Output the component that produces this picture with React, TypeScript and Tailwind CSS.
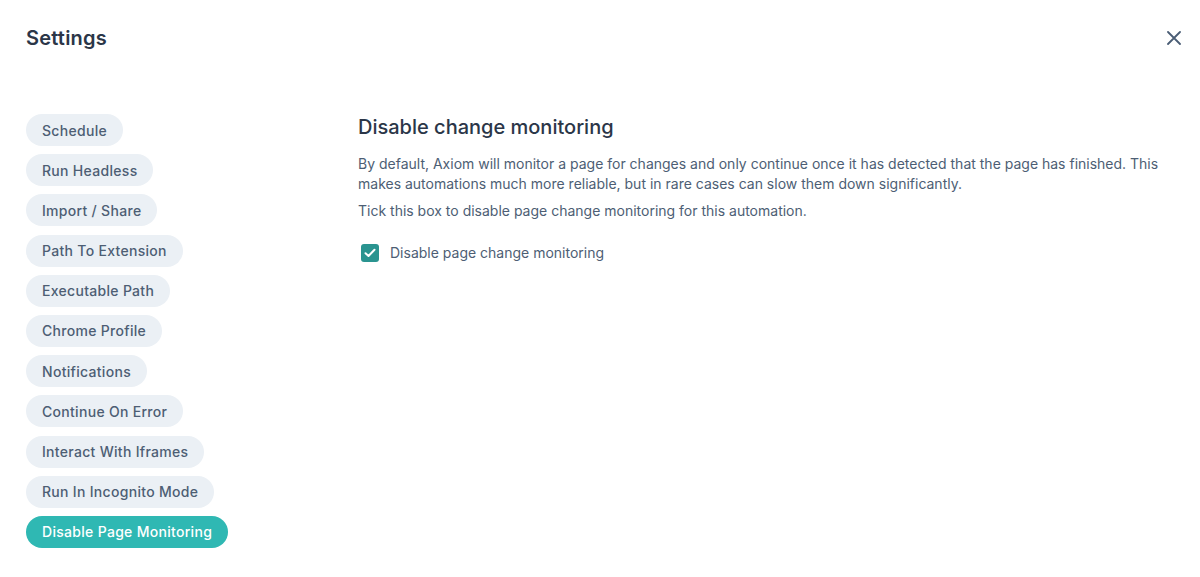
import React from "react";

const items = [
  "Schedule",
  "Run Headless",
  "Import / Share",
  "Path To Extension",
  "Executable Path",
  "Chrome Profile",
  "Notifications",
  "Continue On Error",
  "Interact With Iframes",
  "Run In Incognito Mode",
  "Disable Page Monitoring",
];

export default function App() {
  return (
    <div
      className="w-[1200px] h-[577px] bg-white text-[#2d3a4b] overflow-hidden"
      style={{ fontFamily: "Inter, 'Noto Sans', sans-serif" }}
    >
      <div className="flex items-center justify-between pl-[26px] pr-[18px] pt-[26px] h-[50px]">
        <h1 className="text-[20px] font-semibold text-[#2b3648] leading-[24px] tracking-[0.2px]">Settings</h1>
        <button className="w-[16px] h-[16px] flex items-center justify-center text-[#4a5d75]">
          <svg width="14" height="14" viewBox="0 0 14 14" fill="none" stroke="currentColor" strokeWidth="1.8" strokeLinecap="round">
            <path d="M1 1L13 13M13 1L1 13" />
          </svg>
        </button>
      </div>
      <div className="flex pl-[26px] pt-[64px]">
        <nav className="w-[332px] flex flex-col items-start gap-[8.2px]">
          {items.map((it, i) => {
            const active = i === items.length - 1;
            return (
              <div
                key={it}
                className={
                  "h-[32px] px-[16px] rounded-full flex items-center text-[14px] font-medium tracking-[0.3px] " +
                  (active ? "bg-[#2fb8b3] text-white" : "bg-[#ebf0f5] text-[#4d5e74]")
                }
              >
                {it}
              </div>
            );
          })}
        </nav>
        <div className="flex-1 pt-[1px]">
          <h2 className="text-[20px] font-medium text-[#2b3648] leading-[24px]">Disable change monitoring</h2>
          <p className="mt-[15px] text-[14px] leading-[20px] text-[#4d5e74] w-[812px]">
            By default, Axiom will monitor a page for changes and only continue once it has detected that the page has finished. This makes automations much more reliable, but in rare cases can slow them down significantly.
          </p>
          <p className="mt-[7px] text-[14px] leading-[20px] text-[#4d5e74]">
            Tick this box to disable page change monitoring for this automation.
          </p>
          <label className="mt-[21px] flex items-center gap-[11px] ml-[3px]">
            <span className="w-[18px] h-[18px] rounded-[3px] bg-[#2a9490] flex items-center justify-center">
              <svg width="12" height="10" viewBox="0 0 12 10" fill="none" stroke="white" strokeWidth="2" strokeLinecap="round" strokeLinejoin="round">
                <path d="M1.5 5.2L4.5 8L10.5 1.8" />
              </svg>
            </span>
            <span className="text-[14px] text-[#4d5e74]">Disable page change monitoring</span>
          </label>
        </div>
      </div>
    </div>
  );
}
